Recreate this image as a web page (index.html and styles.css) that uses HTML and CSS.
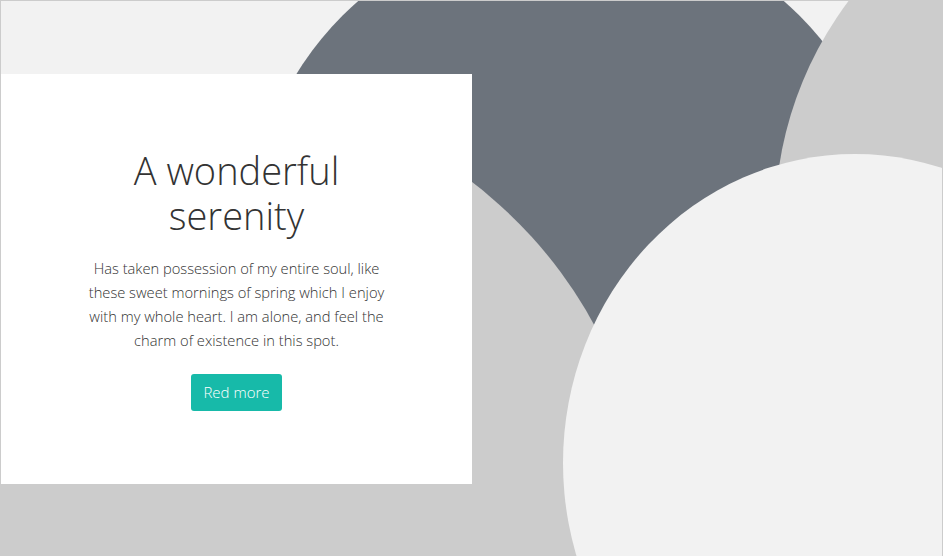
FILE: index.html
```html
<!DOCTYPE html>
<html lang="en">
<head>
<meta charset="utf-8">
<title>A wonderful serenity</title>
<link rel="stylesheet" href="styles.css">
</head>
<body>
<div class="stage">
  <div class="blob blob-dark"></div>
  <div class="blob blob-left"></div>
  <div class="blob blob-right"></div>
  <div class="blob blob-big"></div>
  <section class="card">
    <h1 class="card-title">A wonderful serenity</h1>
    <p class="card-text">Has taken possession of my entire soul, like<br>these sweet mornings of spring which I enjoy<br>with my whole heart. I am alone, and feel the<br>charm of existence in this spot.</p>
    <a class="btn" href="#">Red more</a>
  </section>
</div>
</body>
</html>
```
FILE: styles.css
```css
html, body {
  margin: 0;
  padding: 0;
}
body {
  font-family: "Open Sans", "Liberation Sans", sans-serif;
  font-weight: 300;
  color: #333;
  background: #f2f2f2;
}
.stage {
  position: relative;
  height: 556px;
  border: 1px solid #cccccc;
  border-bottom: 0;
  background: #f2f2f2;
  overflow: hidden;
  padding-top: 73px;
  box-sizing: border-box;
}
.blob {
  position: absolute;
  border-radius: 50%;
}
.blob-dark {
  left: 247px;
  top: -80px;
  width: 646px;
  height: 646px;
  background: #6c737c;
}
.blob-left {
  left: -345px;
  top: 73px;
  width: 988px;
  height: 892px;
  background: #cccccc;
}
.blob-right {
  left: 774px;
  top: -146px;
  width: 732px;
  height: 732px;
  background: #cccccc;
}
.blob-big {
  left: 562px;
  top: 153px;
  width: 584px;
  height: 618px;
  background: #f2f2f2;
}
.card {
  position: relative;
  z-index: 1;
  width: 471px;
  height: 410px;
  background: #ffffff;
  display: flex;
  flex-direction: column;
  align-items: center;
  justify-content: center;
  text-align: center;
}
.card-title {
  margin: 0;
  width: 300px;
  font-size: 38px;
  font-weight: 300;
  line-height: 45px;
  color: #333;
}
.card-text {
  margin: 18px 0 22px;
  font-size: 14.7px;
  line-height: 24px;
  color: #333;
}
.btn {
  display: inline-block;
  padding: 7px 12px;
  line-height: 23px;
  font-size: 15px;
  font-weight: 300;
  color: #ffffff;
  background: #17baa9;
  border-radius: 3px;
  text-decoration: none;
}
```
